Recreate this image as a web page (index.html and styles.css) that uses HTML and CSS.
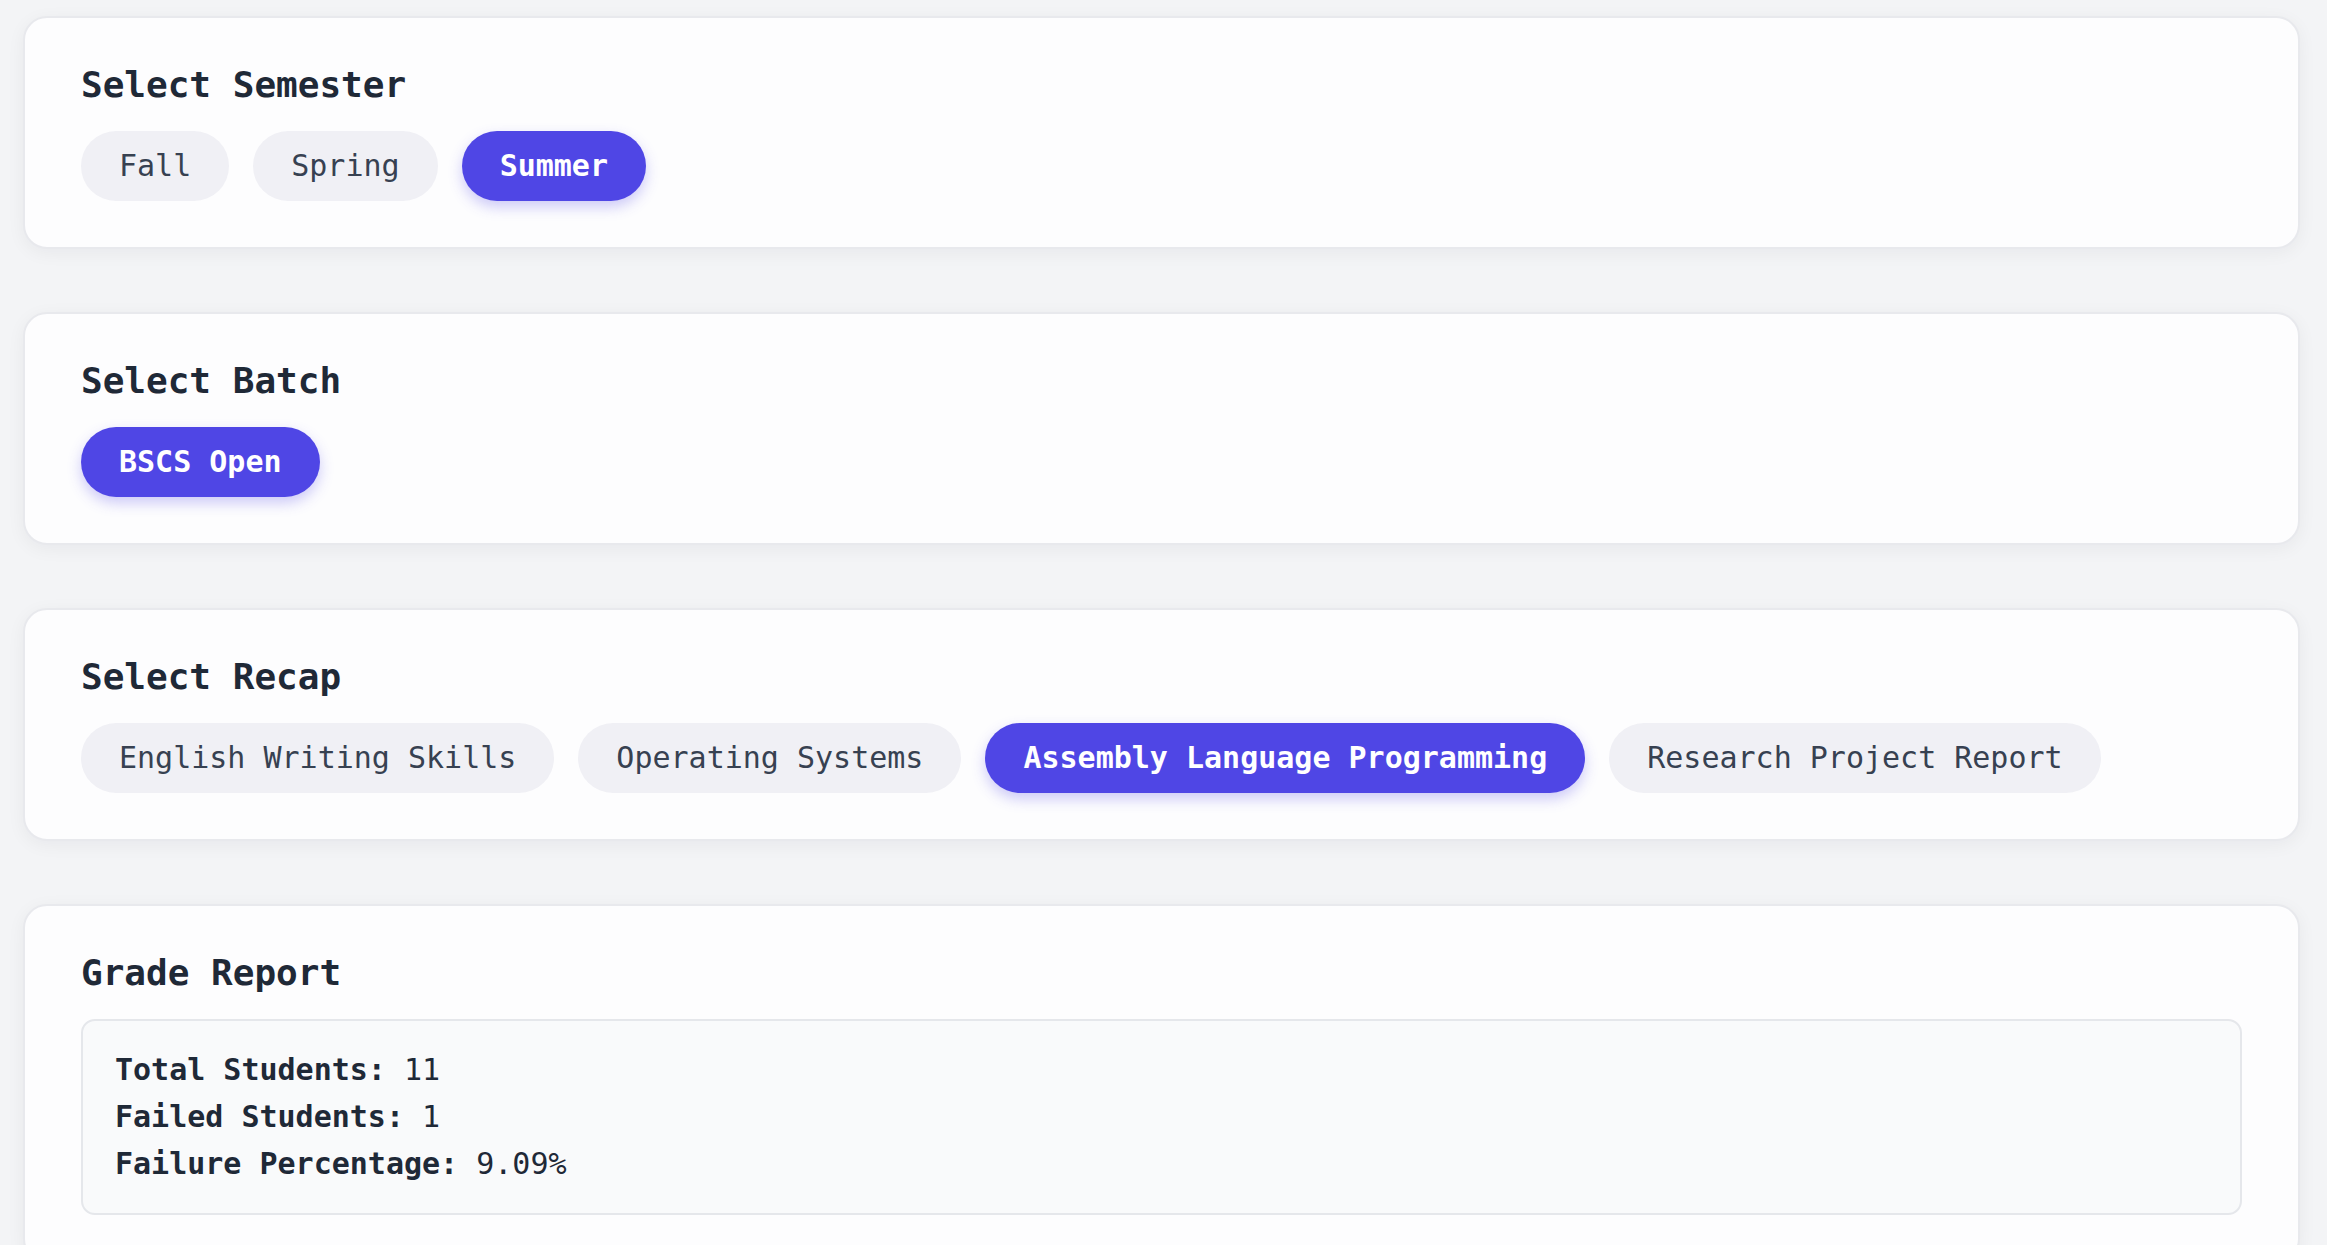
FILE: index.html
```html
<!DOCTYPE html>
<html lang="en">
<head>
<meta charset="utf-8">
<title>Grade Report</title>
<link rel="stylesheet" href="styles.css">
</head>
<body>
<main class="page">
  <section class="card">
    <h2 class="card-title">Select Semester</h2>
    <div class="pills">
      <button class="pill">Fall</button>
      <button class="pill">Spring</button>
      <button class="pill active">Summer</button>
    </div>
  </section>

  <section class="card">
    <h2 class="card-title">Select Batch</h2>
    <div class="pills">
      <button class="pill active">BSCS Open</button>
    </div>
  </section>

  <section class="card">
    <h2 class="card-title">Select Recap</h2>
    <div class="pills">
      <button class="pill">English Writing Skills</button>
      <button class="pill">Operating Systems</button>
      <button class="pill active">Assembly Language Programming</button>
      <button class="pill">Research Project Report</button>
    </div>
  </section>

  <section class="card">
    <h2 class="card-title">Grade Report</h2>
    <div class="report">
      <p class="report-line"><strong>Total Students:</strong> 11</p>
      <p class="report-line"><strong>Failed Students:</strong> 1</p>
      <p class="report-line"><strong>Failure Percentage:</strong> 9.09%</p>
    </div>
  </section>
</main>
</body>
</html>
```

FILE: styles.css
```css
html, body {
  margin: 0;
  padding: 0;
}

body {
  background: #f3f4f6;
  font-family: "DejaVu Sans Mono", monospace;
  color: #1f2937;
}

.page {
  display: flex;
  flex-direction: column;
  gap: 63px;
  padding: 16px 27px 16px 23px;
}

.card {
  background: #fdfdfe;
  border: 2px solid #e8e9ed;
  border-radius: 24px;
  padding: 46px 56px;
  box-shadow: 0 4px 18px rgba(17, 24, 39, 0.05);
}

.card-title {
  margin: 0 0 25px;
  font-size: 36px;
  font-weight: bold;
  line-height: 42px;
  color: #1f2937;
}

.pills {
  display: flex;
  flex-wrap: wrap;
  gap: 24px;
}

.pill {
  font-family: "DejaVu Sans Mono", monospace;
  font-size: 30px;
  line-height: 36px;
  height: 70px;
  padding: 17px 38px;
  border: none;
  border-radius: 999px;
  background: #f0f0f5;
  color: #374151;
  cursor: pointer;
}

.pill.active {
  background: #4f46e5;
  color: #ffffff;
  font-weight: bold;
  box-shadow: 0 6px 14px rgba(79, 70, 229, 0.28);
}

.report {
  background: #f9fafb;
  border: 2px solid #e5e7eb;
  border-radius: 14px;
  padding: 25px 32px 26px;
}

.report-line {
  margin: 0;
  font-size: 30px;
  line-height: 47px;
  color: #1f2937;
}

.report-line strong {
  font-weight: bold;
}
```
